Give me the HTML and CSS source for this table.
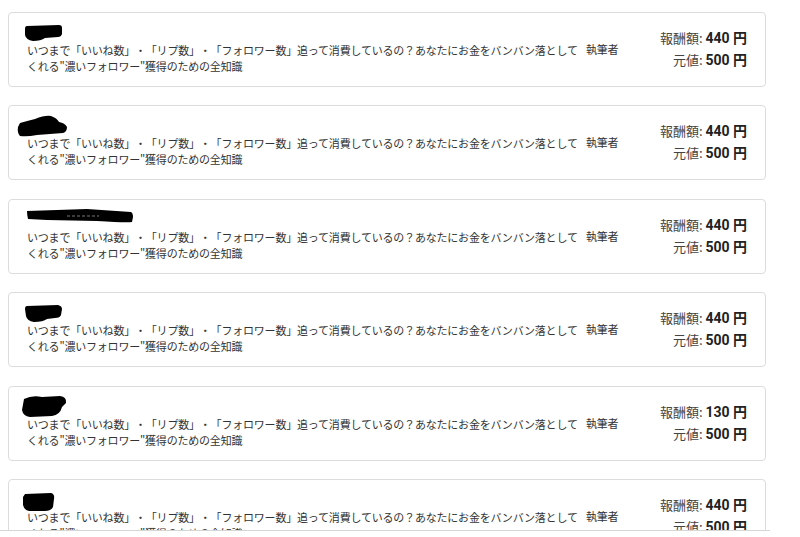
FILE: index.html
```html
<!DOCTYPE html>
<html lang="ja">
<head>
  <meta charset="UTF-8">
  <meta name="viewport" content="width=device-width, initial-scale=1.0">
  <title>執筆依頼一覧</title>
  <link rel="stylesheet" href="styles.css">
</head>
<body>
  <div class="list">

    <div class="card">
      <div class="info">
        <div class="name">
          <svg class="redact r1" width="38" height="16" viewBox="0 0 38 16"><path d="M2,1 L34,0 Q37,0 37,3 L37,9 Q36,12 33,12 L20,13 Q16,16 8,16 Q1,15 0,10 L0,4 Q0,1 2,1 Z"/></svg>
        </div>
        <p class="desc">いつまで「いいね数」・「リプ数」・「フォロワー数」追って消費しているの？あなたにお金をバンバン落としてくれる"濃いフォロワー"獲得のための全知識</p>
      </div>
      <div class="author">執筆者</div>
      <div class="price">
        <div>報酬額: <b>440 円</b></div>
        <div>元値: <b>500 円</b></div>
      </div>
    </div>

    <div class="card">
      <div class="info">
        <div class="name">
          <svg class="redact r2" width="50" height="22" viewBox="0 0 50 22"><path d="M3,8 Q10,6 18,4 Q28,0 34,1 Q40,3 42,7 Q48,8 50,12 Q50,17 46,18 L20,20 Q10,22 3,21 Q0,18 1,12 Z"/></svg>
        </div>
        <p class="desc">いつまで「いいね数」・「リプ数」・「フォロワー数」追って消費しているの？あなたにお金をバンバン落としてくれる"濃いフォロワー"獲得のための全知識</p>
      </div>
      <div class="author">執筆者</div>
      <div class="price">
        <div>報酬額: <b>440 円</b></div>
        <div>元値: <b>500 円</b></div>
      </div>
    </div>

    <div class="card">
      <div class="info">
        <div class="name">
          <svg class="redact r3" width="106" height="15" viewBox="0 0 106 15"><path d="M0,2 L60,0 L104,3 Q106,4 106,8 L105,13 Q100,14 70,12 L20,11 L1,10 Q0,6 0,2 Z"/><line x1="40" y1="7" x2="72" y2="7" stroke="#777" stroke-width="1" stroke-dasharray="3 2"/></svg>
        </div>
        <p class="desc">いつまで「いいね数」・「リプ数」・「フォロワー数」追って消費しているの？あなたにお金をバンバン落としてくれる"濃いフォロワー"獲得のための全知識</p>
      </div>
      <div class="author">執筆者</div>
      <div class="price">
        <div>報酬額: <b>440 円</b></div>
        <div>元値: <b>500 円</b></div>
      </div>
    </div>

    <div class="card">
      <div class="info">
        <div class="name">
          <svg class="redact r4" width="38" height="17" viewBox="0 0 38 17"><path d="M2,1 L33,0 Q37,1 37,4 L36,10 Q35,13 30,13 L22,14 Q18,17 9,17 Q2,16 1,11 L0,4 Q0,1 2,1 Z"/></svg>
        </div>
        <p class="desc">いつまで「いいね数」・「リプ数」・「フォロワー数」追って消費しているの？あなたにお金をバンバン落としてくれる"濃いフォロワー"獲得のための全知識</p>
      </div>
      <div class="author">執筆者</div>
      <div class="price">
        <div>報酬額: <b>440 円</b></div>
        <div>元値: <b>500 円</b></div>
      </div>
    </div>

    <div class="card">
      <div class="info">
        <div class="name">
          <svg class="redact r5" width="45" height="22" viewBox="0 0 45 22"><path d="M2,4 Q10,0 20,2 L38,1 Q45,2 44,8 L40,12 Q38,20 30,21 L8,22 Q1,21 0,15 Z"/></svg>
        </div>
        <p class="desc">いつまで「いいね数」・「リプ数」・「フォロワー数」追って消費しているの？あなたにお金をバンバン落としてくれる"濃いフォロワー"獲得のための全知識</p>
      </div>
      <div class="author">執筆者</div>
      <div class="price">
        <div>報酬額: <b>130 円</b></div>
        <div>元値: <b>500 円</b></div>
      </div>
    </div>

    <div class="card">
      <div class="info">
        <div class="name">
          <svg class="redact r6" width="32" height="18" viewBox="0 0 32 18"><path d="M2,1 L28,0 Q32,1 31,6 L30,14 Q28,18 22,18 L6,18 Q1,17 0,12 L0,4 Z"/></svg>
        </div>
        <p class="desc">いつまで「いいね数」・「リプ数」・「フォロワー数」追って消費しているの？あなたにお金をバンバン落としてくれる"濃いフォロワー"獲得のための全知識</p>
      </div>
      <div class="author">執筆者</div>
      <div class="price">
        <div>報酬額: <b>440 円</b></div>
        <div>元値: <b>500 円</b></div>
      </div>
    </div>

  </div>
</body>
</html>
```

FILE: styles.css
```css
body {
  margin: 0;
  background: #fff;
  font-family: "Noto Sans CJK JP", "Noto Sans", sans-serif;
  color: #333;
}
.list {
  width: 770px;
  height: 531px;
  box-sizing: border-box;
  padding: 12px 4px 0 8px;
  overflow: hidden;
  border-bottom: 1px solid #d6d6d6;
}
.card {
  display: flex;
  align-items: center;
  width: 758px;
  box-sizing: border-box;
  padding: 11px 18px 12px 18px;
  margin-bottom: 18.4px;
  border: 1px solid #dcdcdc;
  border-radius: 4px;
  background: #fff;
}
.info {
  width: 556px;
  flex: 0 0 556px;
}
.name {
  height: 18px;
  display: flex;
  align-items: flex-start;
}
.redact {
  display: block;
  fill: #000;
  overflow: visible;
  flex: none;
}
.r1 { margin: 1px 0 0 -2px; }
.r2 { margin: -2px 0 0 -10px; }
.r3 { margin: -2px 0 0 0; }
.r4 { margin: 1px 0 0 -2px; }
.r5 { margin: -3px 0 0 -5px; }
.r6 { margin: 2px 0 0 -4px; }
.desc {
  margin: 0;
  font-size: 11px;
  line-height: 16px;
  letter-spacing: -0.2px;
  text-spacing-trim: space-all;
  color: #333;
}
.author {
  margin-left: 3px;
  font-size: 11px;
  color: #333;
  letter-spacing: -0.2px;
}
.price {
  margin-left: auto;
  text-align: right;
  font-size: 13px;
  line-height: 22px;
  color: #444;
}
.price b {
  font-family: Roboto, "Liberation Sans", "Noto Sans CJK JP", sans-serif;
  font-size: 14px;
  font-weight: bold;
  color: #222;
}
```
